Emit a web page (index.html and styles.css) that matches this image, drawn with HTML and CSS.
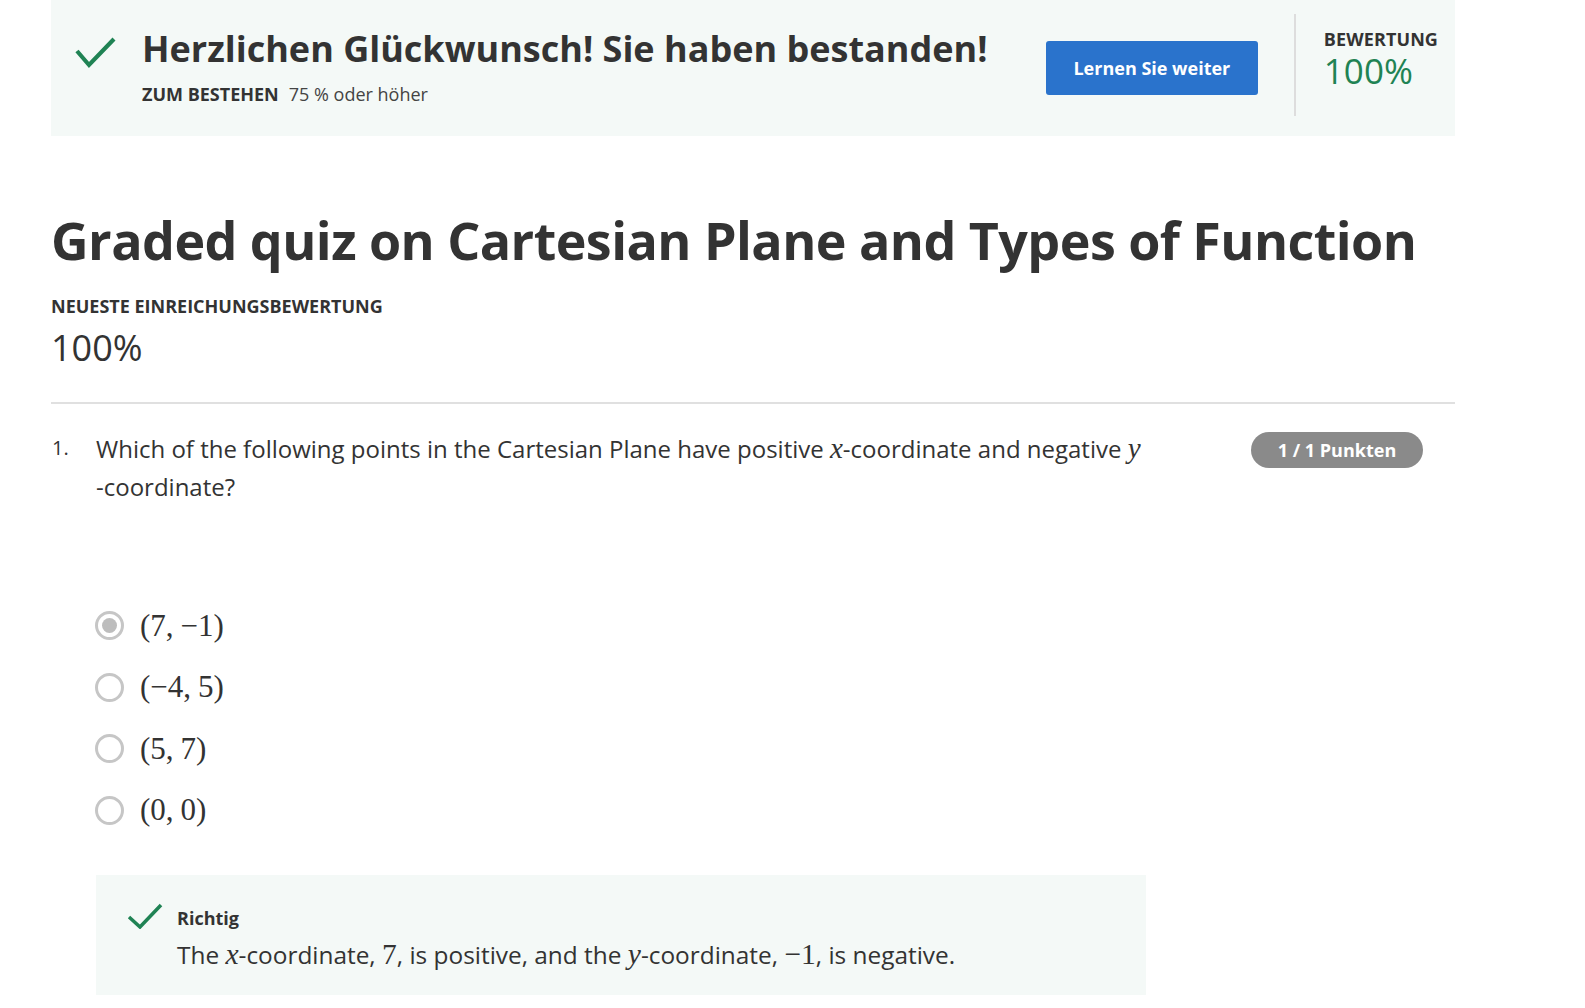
FILE: index.html
```html
<!DOCTYPE html>
<html lang="de">
<head>
<meta charset="utf-8">
<title>Graded quiz</title>
<link rel="stylesheet" href="styles.css">
</head>
<body>
<div class="page">
  <section class="banner">
    <svg class="banner-check" width="42" height="34" viewBox="0 0 42 34" aria-hidden="true">
      <polyline points="2,15 14,29 39,3" fill="none" stroke="#1f8354" stroke-width="4.2" stroke-linecap="butt" stroke-linejoin="miter"/>
    </svg>
    <div class="banner-text">
      <h2 class="banner-title">Herzlichen Glückwunsch! Sie haben bestanden!</h2>
      <div class="banner-sub"><span class="sub-label">ZUM BESTEHEN</span><span class="sub-value">75 % oder höher</span></div>
    </div>
    <button class="btn">Lernen Sie weiter</button>
    <div class="divider"></div>
    <div class="score">
      <div class="score-label">BEWERTUNG</div>
      <div class="score-value">100%</div>
    </div>
  </section>

  <h1 class="title">Graded quiz on Cartesian Plane and Types of Function</h1>
  <div class="latest-label">NEUESTE EINREICHUNGSBEWERTUNG</div>
  <div class="latest-value">100%</div>
  <div class="rule"></div>

  <div class="question">
    <div class="q-num">1.</div>
    <div class="q-body">
      <div class="q-text">Which of the following points in the Cartesian Plane have positive <span class="mi">x</span>-coordinate and negative <span class="mi">y</span><br>-coordinate?</div>
      <ul class="options">
        <li class="option"><span class="radio radio-checked"></span><span class="math">(7,<span class="thin"></span>−1)</span></li>
        <li class="option"><span class="radio"></span><span class="math">(−4,<span class="thin"></span>5)</span></li>
        <li class="option"><span class="radio"></span><span class="math">(5,<span class="thin"></span>7)</span></li>
        <li class="option"><span class="radio"></span><span class="math">(0,<span class="thin"></span>0)</span></li>
      </ul>
      <div class="feedback">
        <div class="fb-head">
          <svg class="fb-check" width="36" height="26" viewBox="0 0 36 26" aria-hidden="true">
            <polyline points="2,14 13,24 34,2" fill="none" stroke="#1f8354" stroke-width="3.5"/>
          </svg>
          <span class="fb-title">Richtig</span>
        </div>
        <div class="fb-text">The <span class="mi">x</span>-coordinate, <span class="mn">7</span>, is positive, and the <span class="mi">y</span>-coordinate, <span class="mn">−1</span>, is negative.</div>
      </div>
    </div>
    <div class="badge">1 / 1 Punkten</div>
  </div>
</div>
</body>
</html>
```

FILE: styles.css
```css
* { box-sizing: border-box; }

html, body {
  margin: 0;
  padding: 0;
  background: #ffffff;
}

body {
  font-family: "Open Sans", "Noto Sans", "Liberation Sans", sans-serif;
  color: #333333;
}

.page {
  margin-left: 51px;
  width: 1404px;
}

/* Banner */
.banner {
  height: 136px;
  background: #f4f9f7;
  display: flex;
  align-items: flex-start;
  padding-left: 24px;
  padding-right: 17px;
}

.banner-check {
  margin-top: 36px;
  flex: none;
}

.banner-text {
  flex: 1;
  margin-left: 25px;
  padding-top: 27px;
}

.banner-title {
  margin: 0;
  font-size: 36px;
  line-height: 44px;
  font-weight: 700;
  color: #333333;
}

.banner-sub {
  margin-top: 11px;
  font-size: 18px;
  line-height: 24px;
  color: #444444;
}

.sub-label {
  font-weight: 700;
  color: #333333;
  margin-right: 10px;
}

.sub-value {
  font-weight: 400;
}

.btn {
  margin-top: 41px;
  width: 212px;
  height: 54px;
  border: none;
  border-radius: 3px;
  background: #2a73cc;
  color: #ffffff;
  font-family: inherit;
  font-size: 18px;
  font-weight: 700;
  padding: 0;
  flex: none;
}

.divider {
  margin-top: 14px;
  margin-left: 36px;
  margin-right: 28px;
  width: 2px;
  height: 102px;
  background: #dddddd;
  flex: none;
}

.score {
  padding-top: 28px;
  flex: none;
}

.score-label {
  font-size: 18px;
  line-height: 22px;
  font-weight: 700;
  color: #333333;
  letter-spacing: 0.1px;
}

.score-value {
  margin-top: 2px;
  font-size: 35px;
  line-height: 38px;
  font-weight: 400;
  color: #1f8354;
}

/* Title section */
.title {
  margin: 69px 0 0 0;
  font-size: 52px;
  line-height: 70px;
  font-weight: 700;
  letter-spacing: -0.55px;
  white-space: nowrap;
  color: #333333;
}

.latest-label {
  margin-top: 19px;
  font-size: 18px;
  line-height: 24px;
  font-weight: 700;
  color: #333333;
}

.latest-value {
  margin-top: 8px;
  font-size: 36px;
  line-height: 44px;
  font-weight: 400;
  color: #333333;
}

.rule {
  margin-top: 32px;
  height: 2px;
  background: #e0e0e0;
}

/* Question */
.question {
  display: flex;
  align-items: flex-start;
  margin-top: 26px;
}

.q-num {
  width: 45px;
  flex: none;
  font-size: 20px;
  line-height: 35px;
  padding-left: 1px;
}

.q-body {
  width: 1050px;
  flex: none;
}

.q-text {
  font-size: 24px;
  line-height: 37.5px;
  color: #333333;
}

.mi {
  font-family: "Liberation Serif", "DejaVu Serif", serif;
  font-style: italic;
  font-size: 1.21em;
  line-height: 1;
}

.mn {
  font-family: "Liberation Serif", "DejaVu Serif", serif;
  font-size: 1.21em;
  line-height: 1;
}

.options {
  list-style: none;
  margin: 90px 0 0 0;
  padding: 0;
}

.option {
  height: 61.5px;
  display: flex;
  align-items: center;
  margin-left: -1px;
}

.radio {
  width: 29px;
  height: 29px;
  border-radius: 50%;
  border: 3px solid #c6c6c6;
  flex: none;
  display: flex;
  align-items: center;
  justify-content: center;
}

.radio-checked::after {
  content: "";
  width: 15px;
  height: 15px;
  border-radius: 50%;
  background: #bdbdbd;
}

.math {
  margin-left: 16px;
  font-family: "Liberation Serif", "DejaVu Serif", serif;
  font-size: 31px;
  line-height: 36px;
  color: #333333;
}

.thin {
  display: inline-block;
  width: 7px;
}

.feedback {
  margin-top: 34px;
  background: #f4f9f7;
  padding: 28px 0 24px 31px;
}

.fb-head {
  display: flex;
  align-items: flex-start;
}

.fb-check {
  flex: none;
}

.fb-title {
  margin-left: 14px;
  margin-top: 3px;
  font-size: 18px;
  line-height: 24px;
  font-weight: 700;
  color: #333333;
}

.fb-text {
  margin-top: 9px;
  margin-left: 50px;
  font-size: 24.4px;
  line-height: 32px;
  color: #333333;
}

.badge {
  margin-left: auto;
  margin-right: 32px;
  margin-top: 2px;
  width: 172px;
  height: 36px;
  border-radius: 18px;
  background: #8a8a8a;
  color: #ffffff;
  font-size: 18px;
  font-weight: 700;
  line-height: 36px;
  text-align: center;
  flex: none;
}
```
